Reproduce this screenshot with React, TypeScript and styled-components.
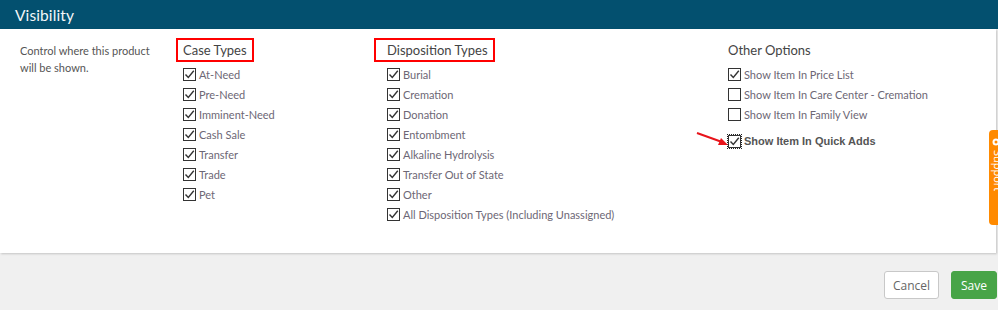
import React from 'react';
import styled, { createGlobalStyle } from 'styled-components';

const GlobalStyle = createGlobalStyle`
  html, body {
    margin: 0;
    padding: 0;
    background: #f0f0f0;
    font-family: Lato, "Open Sans", sans-serif;
  }
`;

const Page = styled.div`
  position: relative;
  width: 998px;
  height: 310px;
  overflow: hidden;
`;

const Header = styled.div`
  height: 29px;
  background: #03506f;
  color: #f4f7f9;
  font-size: 15.5px;
  display: flex;
  align-items: center;
  padding-left: 15px;
  letter-spacing: 0.1px;
`;

const Panel = styled.div`
  width: 996px;
  height: 224px;
  background: #fff;
  box-shadow: 1px 1px 2px rgba(0, 0, 0, 0.18);
  display: grid;
  grid-template-columns: 163px 204px 341px 1fr;
  padding: 9px 0 0 20px;
  box-sizing: border-box;
`;

const Description = styled.div`
  margin-top: 4px;
  font-size: 11px;
  line-height: 17px;
  color: #555;
  width: 135px;
`;

const Column = styled.div`
  display: flex;
  flex-direction: column;
  align-items: flex-start;
`;

const Title = styled.div<{ $boxed?: boolean; $shift?: number }>`
  box-sizing: border-box;
  height: 24px;
  display: flex;
  align-items: center;
  font-size: 13px;
  color: #444;
  margin-bottom: 2px;
  margin-left: ${p => (p.$shift ? -p.$shift : 0)}px;
  padding: 0 ${p => (p.$boxed ? 5 : 0)}px 0 ${p => (p.$shift ? p.$shift - 2 : 0)}px;
  border: ${p => (p.$boxed ? '2px solid #f00' : 'none')};
`;

const Row = styled.label<{ $gap?: number }>`
  display: flex;
  align-items: center;
  height: 20px;
  margin-top: ${p => p.$gap ?? 0}px;
  font-size: 11px;
  color: #6d6775;
  white-space: nowrap;
`;

const Box = styled.span<{ $focus?: boolean }>`
  position: relative;
  width: 13px;
  height: 13px;
  box-sizing: border-box;
  border: 1px solid #333;
  background: #fff;
  margin-right: 3px;
  display: inline-flex;
  align-items: center;
  justify-content: center;
  outline: ${p => (p.$focus ? '1px dotted #222' : 'none')};
  outline-offset: 0;
`;

const BoldLabel = styled.span`
  font-family: "Liberation Sans", Arial, sans-serif;
  font-weight: bold;
  color: #555;
  font-size: 11px;
`;

const Footer = styled.div`
  display: flex;
  justify-content: flex-end;
  gap: 12px;
  padding: 18px 1px 0 0;
`;

const Button = styled.button<{ $primary?: boolean }>`
  height: 28px;
  padding: 0 ${p => (p.$primary ? 9 : 8)}px;
  font-family: "Open Sans", sans-serif;
  font-size: 12px;
  border-radius: 3px;
  border: 1px solid ${p => (p.$primary ? '#47a447' : '#c8c8c8')};
  background: ${p => (p.$primary ? '#47a447' : '#fff')};
  color: ${p => (p.$primary ? '#fff' : '#666')};
`;

const SupportTab = styled.div`
  position: absolute;
  left: 989px;
  top: 130px;
  width: 14px;
  height: 95px;
  background: #ff8a00;
  border-radius: 4px 0 0 4px;
  color: #fff;
  display: flex;
  flex-direction: column;
  align-items: center;
  padding-top: 8px;
  box-sizing: border-box;
  gap: 4px;
`;

const SupportText = styled.span`
  writing-mode: vertical-rl;
  font-size: 11px;
  font-family: "Open Sans", sans-serif;
  margin-left: 4px;
`;

const Arrow = styled.svg`
  position: absolute;
  left: 694px;
  top: 130px;
`;

const Check = () => (
  <svg width="11" height="11" viewBox="0 0 11 11">
    <path d="M1.5 5.5 L4.3 8.5 L9.8 1.8" fill="none" stroke="#333" strokeWidth="1.4" />
  </svg>
);

interface Item {
  label: string;
  checked: boolean;
}

const caseTypes = ['At-Need', 'Pre-Need', 'Imminent-Need', 'Cash Sale', 'Transfer', 'Trade', 'Pet'];
const dispositionTypes = [
  'Burial',
  'Cremation',
  'Donation',
  'Entombment',
  'Alkaline Hydrolysis',
  'Transfer Out of State',
  'Other',
  'All Disposition Types (Including Unassigned)',
];
const otherOptions: Item[] = [
  { label: 'Show Item In Price List', checked: true },
  { label: 'Show Item In Care Center - Cremation', checked: false },
  { label: 'Show Item In Family View', checked: false },
];

const CheckRow: React.FC<Item> = ({ label, checked }) => (
  <Row>
    <Box>{checked && <Check />}</Box>
    {label}
  </Row>
);

export default function App() {
  return (
    <Page>
      <GlobalStyle />
      <Header>Visibility</Header>
      <Panel>
        <Description>Control where this product will be shown.</Description>
        <Column>
          <Title $boxed $shift={7}>Case Types</Title>
          {caseTypes.map(t => (
            <CheckRow key={t} label={t} checked />
          ))}
        </Column>
        <Column>
          <Title $boxed $shift={13}>Disposition Types</Title>
          {dispositionTypes.map(t => (
            <CheckRow key={t} label={t} checked />
          ))}
        </Column>
        <Column>
          <Title>Other Options</Title>
          {otherOptions.map(o => (
            <CheckRow key={o.label} {...o} />
          ))}
          <Row $gap={7}>
            <Box $focus>
              <Check />
            </Box>
            <BoldLabel>Show Item In Quick Adds</BoldLabel>
          </Row>
        </Column>
      </Panel>
      <Footer>
        <Button>Cancel</Button>
        <Button $primary>Save</Button>
      </Footer>
      <Arrow width="36" height="20" viewBox="0 0 36 20">
        <line x1="3" y1="3" x2="28" y2="12" stroke="#e8141b" strokeWidth="2" />
        <polygon points="34,15 24,15 27,8" fill="#e8141b" />
      </Arrow>
      <SupportTab>
        <svg width="8" height="8" viewBox="0 0 8 8">
          <circle cx="4" cy="4" r="3.5" fill="#fff" />
          <circle cx="4" cy="4" r="1.5" fill="#ff8a00" />
        </svg>
        <SupportText>Support</SupportText>
      </SupportTab>
    </Page>
  );
}
